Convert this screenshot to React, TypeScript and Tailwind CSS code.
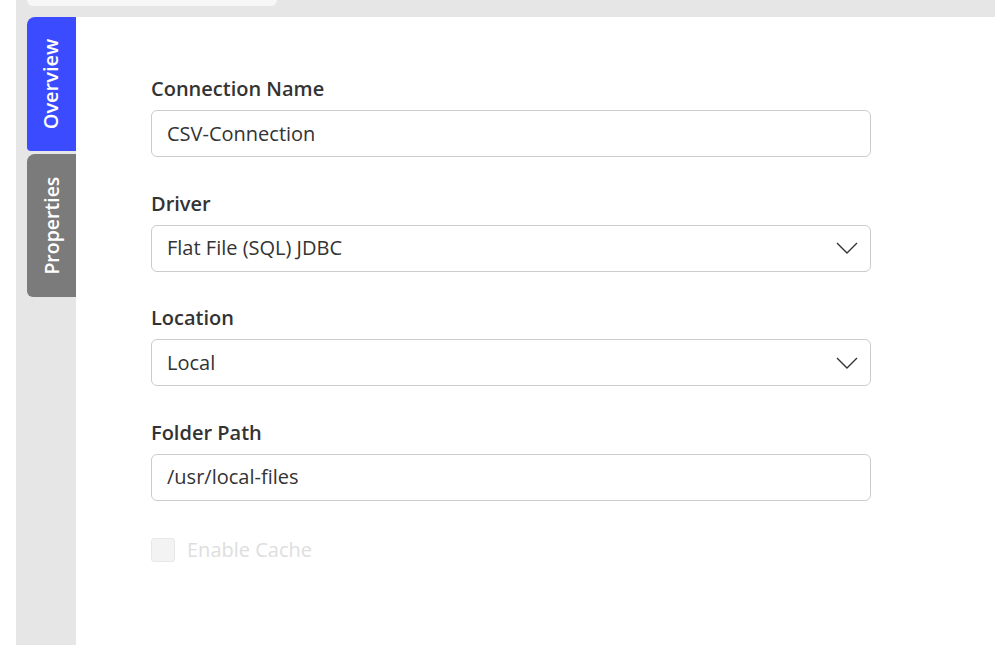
import React from "react";

function Chevron() {
  return (
    <svg width="22" height="12" viewBox="0 0 22 12" className="shrink-0">
      <path d="M1 1 L11 11 L21 1" fill="none" stroke="#333" strokeWidth="1.4" />
    </svg>
  );
}

function Field({ label, value, select }: { label: string; value: string; select?: boolean }) {
  return (
    <div className="flex flex-col">
      <div className="text-[20px] font-semibold text-[#333] leading-[26px] mb-[8px]">{label}</div>
      <div className="h-[47px] w-[720px] border border-[#cccccc] rounded-[6px] bg-white flex items-center pl-[15px] pr-[12px] justify-between">
        <span className="text-[20px] text-[#333] leading-[26px]">{value}</span>
        {select && <Chevron />}
      </div>
    </div>
  );
}

export default function App() {
  return (
    <div className="w-[995px] h-[645px] bg-white flex overflow-hidden" style={{ fontFamily: '"Open Sans", "Noto Sans", sans-serif' }}>
      <div className="w-[16px] shrink-0 bg-white" />
      <div className="flex-1 flex flex-col bg-[#e6e6e6]">
        <div className="h-[17px] shrink-0 relative">
          <div className="absolute left-[11px] top-0 w-[250px] h-[6px] bg-[#f7f7f7] rounded-b-[8px]" />
        </div>
        <div className="flex flex-1">
          <div className="w-[60px] shrink-0 bg-[#e6e6e6] flex flex-col items-end gap-[3px]">
            <div className="w-[49px] h-[134px] bg-[#3b4bff] rounded-tl-[8px] rounded-bl-[4px] flex items-center justify-center">
              <span className="text-white text-[20px] font-semibold -rotate-90 whitespace-nowrap">Overview</span>
            </div>
            <div className="w-[49px] h-[143px] bg-[#7b7b7b] rounded-tl-[8px] rounded-bl-[6px] flex items-center justify-center">
              <span className="text-white text-[19.5px] font-semibold -rotate-90 whitespace-nowrap">Properties</span>
            </div>
          </div>
          <div className="flex-1 bg-white pl-[75px] pt-[59px] flex flex-col gap-[33.5px]">
            <Field label="Connection Name" value="CSV-Connection" />
            <Field label="Driver" value="Flat File (SQL) JDBC" select />
            <Field label="Location" value="Local" select />
            <Field label="Folder Path" value="/usr/local-files" />
            <div className="flex items-center gap-[12px] mt-[1px]">
              <div className="w-[24px] h-[24px] bg-[#f3f3f3] border border-[#e8e8e8] rounded-[3px]" />
              <span className="text-[20px] text-[#dedede]">Enable Cache</span>
            </div>
          </div>
        </div>
      </div>
    </div>
  );
}
